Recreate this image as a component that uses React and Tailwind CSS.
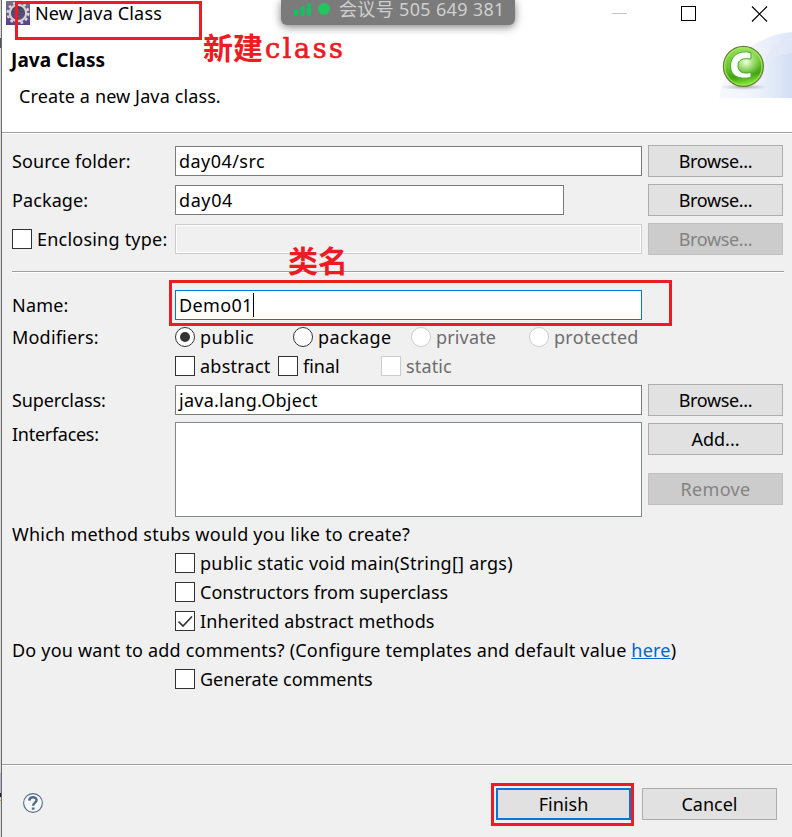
const RED = "absolute border-[3px] border-[#ed1c24]";

function Button({ children, disabled, focused, className = "" }) {
  const tone = disabled
    ? "border border-[#bfbfbf] bg-[#cccccc] text-[#838383]"
    : focused
      ? "border-2 border-[#0078d7] bg-[#e1e1e1]"
      : "border border-[#adadad] bg-[#e1e1e1]";
  return (
    <button className={`flex h-8 w-[135px] shrink-0 items-center justify-center ${tone} ${className}`}>
      <span>{children}</span>
    </button>
  );
}

function Label({ children, className = "" }) {
  return <div className={`w-[163px] shrink-0 ${className}`}>{children}</div>;
}

function Input({ children, className = "w-[467px] border-[#7a7a7a] bg-white" }) {
  return <div className={`flex h-[30px] shrink-0 items-center border pl-[3px] ${className}`}>{children}</div>;
}

function Check({ children, checked, disabled, className = "", textClass = "" }) {
  return (
    <div className={`flex items-center gap-[5px] ${className}`}>
      <span className={`flex size-5 shrink-0 border bg-white ${disabled ? "border-[#cccccc]" : "border-[#333333]"}`}>
        {checked && (
          <svg viewBox="0 0 18 18" className="size-[18px]" fill="none" stroke="#333" strokeWidth="1.7">
            <path d="M2.500 9.500 7 14 16 4.500" />
          </svg>
        )}
      </span>
      <span className={`${disabled ? "text-[#6d6d6d]" : ""} ${textClass}`}>{children}</span>
    </div>
  );
}

function Radio({ children, checked, disabled, textClass = "" }) {
  return (
    <div className="flex w-[118px] shrink-0 items-center gap-[5px]">
      <span className={`flex size-5 shrink-0 items-center justify-center rounded-full border bg-white ${disabled ? "border-[#cccccc]" : "border-[#333333]"}`}>
        {checked && <span className="size-2.5 rounded-full bg-[#333333]" />}
      </span>
      <span className={`${disabled ? "text-[#6d6d6d]" : ""} ${textClass}`}>{children}</span>
    </div>
  );
}

function GearIcon() {
  return (
    <svg viewBox="0 0 24 24" className="size-6">
      <defs>
        <linearGradient id="gearBg" x1="0" y1="0" x2="0" y2="1">
          <stop offset="0" stopColor="#77718b" />
          <stop offset="1" stopColor="#57418a" />
        </linearGradient>
        <linearGradient id="gearCore" x1="0" y1="0" x2="0" y2="1">
          <stop offset="0" stopColor="#3c3948" />
          <stop offset="1" stopColor="#5d5090" />
        </linearGradient>
      </defs>
      <path d="M0 0h24v24H0z" fill="url(#gearBg)" />
      <circle cx="12" cy="12" r="10.300" fill="none" stroke="#dcd8d8" strokeWidth="2.400" strokeDasharray="2.700 2.693" />
      <circle cx="12" cy="12" r="8.200" fill="url(#gearCore)" stroke="#d6d2d2" strokeWidth="2.200" />
      <path d="M6 9h12M5.500 12h13M6 15h12" stroke="#6a6385" strokeWidth="0.700" />
    </svg>
  );
}

function ClassBanner() {
  return (
    <svg viewBox="0 0 73 66" className="h-[66px] w-[73px]">
      <defs>
        <linearGradient id="sweep" x1="0" x2="1">
          <stop offset="0" stopColor="#f6f8fd" />
          <stop offset="0.5" stopColor="#eff3fb" />
          <stop offset="1" stopColor="#dfe7f7" />
        </linearGradient>
        <linearGradient id="sweep2" x1="0" x2="1">
          <stop offset="0" stopColor="#eef2fb" stopOpacity="0" />
          <stop offset="1" stopColor="#ccd8f1" />
        </linearGradient>
        <linearGradient id="ball" x1="0" y1="0" x2="0.2" y2="1">
          <stop offset="0" stopColor="#9be35a" />
          <stop offset="0.5" stopColor="#6cc832" />
          <stop offset="0.8" stopColor="#3fa312" />
          <stop offset="1" stopColor="#7fe030" />
        </linearGradient>
        <radialGradient id="glow">
          <stop offset="0" stopColor="#f2fde6" />
          <stop offset="1" stopColor="#b5ee80" stopOpacity="0" />
        </radialGradient>
        <radialGradient id="shade">
          <stop offset="0" stopColor="#777" stopOpacity="0.6" />
          <stop offset="1" stopColor="#999" stopOpacity="0" />
        </radialGradient>
      </defs>
      <path d="M0 66C6 27 38 3 73 0V66Z" fill="url(#sweep)" />
      <path d="M25 66V38C40 29 58 24 73 21V66Z" fill="url(#sweep2)" opacity="0.65" />
      <path d="M45 29C53 16 62 6 73 1V21C63 22 54 25 45 29Z" fill="#dfe7f7" opacity="0.45" />
      <ellipse cx="25" cy="55" rx="24" ry="3" fill="url(#shade)" />
      <circle cx="24.400" cy="34.400" r="20" fill="url(#ball)" stroke="#6d7d3a" strokeWidth="1.200" />
      <circle cx="27" cy="30" r="15" fill="url(#glow)" />
      <circle cx="24.400" cy="34.400" r="18.600" fill="none" stroke="#a6ef61" strokeWidth="1.200" opacity="0.8" />
      <path d="M32 20.500V27C24 25.800 19 27.500 19 33.500C19 39.800 24 42.300 32 40.500V45.500C20 48 11.500 44 11.500 34C11.500 23.500 20 17.800 32 20.500Z" fill="#fafff7" stroke="#48a72b" strokeWidth="1" />
    </svg>
  );
}

export default function App() {
  return (
    <div className="relative flex h-[837px] w-[792px] overflow-hidden bg-[#f0f0f0] font-['Noto_Sans','Noto_Sans_CJK_SC',sans-serif] text-[18px] leading-6 whitespace-nowrap text-black">
      <div className="flex w-px shrink-0 flex-col bg-[#d8d8d8]">
        <div className="mt-[38px] h-[10px] bg-[#555]" />
        <div className="mt-[725px] h-5 bg-[#b0b8cc]" />
        <div className="h-1 bg-[#201820]" />
        <div className="mt-[3px] h-px bg-[#e0953a]" />
      </div>
      <div className="w-px shrink-0 bg-[#6b6b6b]" />

      <div className="flex grow flex-col">
        <header className="flex h-[134px] shrink-0 flex-col border-b border-white bg-white">
          <div className="flex h-[132px] justify-between">
            <div className="flex flex-col">
              <div className="flex h-[26px] items-center pl-1">
                <GearIcon />
                <span className="ml-[5px] tracking-[0.17px]">New Java Class</span>
              </div>
              <h1 className="mt-[22px] ml-[9px] text-[19px] font-bold tracking-[0.1px]">Java Class</h1>
              <p className="mt-3 ml-[17px] tracking-[0.12px]">Create a new Java class.</p>
            </div>
            <div className="flex flex-col items-end">
              <svg viewBox="0 0 192 32" className="h-8 w-48" fill="none" shapeRendering="crispEdges">
                <path d="M12 13.500h15" stroke="#c4c4c4" />
                <path d="M81.500 6.500h14v14h-14z" stroke="#000" />
                <path d="M152 6.500l15 15M167 6.500l-15 15" stroke="#000" strokeWidth="1.200" shapeRendering="auto" />
              </svg>
              <ClassBanner />
            </div>
          </div>
          <div className="h-px bg-[#a0a0a0]" />
        </header>

        <main className="flex h-[630px] shrink-0 flex-col pt-[11px] pr-2 pl-[10px]">
          <section className="flex flex-col gap-[7px]">
            <div className="flex h-8 items-center">
              <Label className="tracking-[0.08px]">Source folder:</Label>
              <Input className="w-[467px] border-[#7a7a7a] bg-white tracking-[0.45px]">day04/src</Input>
              <Button className="ml-[6px] tracking-[-0.35px]">Browse...</Button>
            </div>
            <div className="flex h-8 items-center">
              <Label className="tracking-[0.1px]">Package:</Label>
              <Input className="w-[389px] border-[#7a7a7a] bg-white tracking-[0.6px]">day04</Input>
              <Button className="ml-[84px] tracking-[-0.35px]">Browse...</Button>
            </div>
            <div className="flex h-8 items-center">
              <Check className="w-[163px] shrink-0" textClass="tracking-[0.22px]">Enclosing type:</Check>
              <Input className="w-[467px] border-[#cccccc] shadow-[inset_0_0_0_1px_#fff]" />
              <Button disabled className="ml-[6px] tracking-[-0.35px]">Browse...</Button>
            </div>
          </section>

          <div className="mt-4 h-[2px] shrink-0 border-t border-[#a0a0a0] bg-white" />

          <div className="mt-[17px] flex h-[30px] items-center">
            <Label className="tracking-[0.2px]">Name:</Label>
            <Input className="w-[467px] border-[#0078d7] bg-white">
              <span className="tracking-[0.35px]">Demo01</span>
              <span className="h-6 w-px bg-black" />
            </Input>
          </div>
          <div className="mt-[2px] flex h-[30px] items-center">
            <Label className="tracking-[0.2px]">Modifiers:</Label>
            <Radio checked textClass="tracking-[0.5px]">public</Radio>
            <Radio textClass="tracking-[0.4px]">package</Radio>
            <Radio disabled textClass="tracking-[0.15px]">private</Radio>
            <Radio disabled textClass="tracking-[0.3px]">protected</Radio>
          </div>
          <div className="flex h-7 items-center pl-[163px]">
            <Check className="w-[103px]" textClass="tracking-[0.25px]">abstract</Check>
            <Check className="w-[103px]">final</Check>
            <Check disabled textClass="tracking-[0.15px]">static</Check>
          </div>
          <div className="mt-1 flex h-8 items-center">
            <Label className="tracking-[-0.1px]">Superclass:</Label>
            <Input className="w-[467px] border-[#7a7a7a] bg-white tracking-[0.25px]">java.lang.Object</Input>
            <Button className="ml-[6px] tracking-[-0.35px]">Browse...</Button>
          </div>
          <div className="mt-[6px] flex h-[95px]">
            <Label className="tracking-[-0.28px]">Interfaces:</Label>
            <div className="h-[95px] w-[467px] border border-[#828790] bg-white" />
            <div className="ml-[6px] flex flex-col gap-[18px] pt-px">
              <Button>Add...</Button>
              <Button disabled className="tracking-[0.3px]">Remove</Button>
            </div>
          </div>

          <section className="mt-[3px] flex flex-col gap-px">
            <div className="flex h-7 items-center tracking-[0.24px]">Which method stubs would you like to create?</div>
            <Check className="h-7 pl-[163px]" textClass="tracking-[0.24px]">public static void main(String[] args)</Check>
            <Check className="h-7 pl-[163px]">Constructors from superclass</Check>
            <Check checked className="h-7 pl-[163px]" textClass="tracking-[0.12px]">Inherited abstract methods</Check>
            <div className="flex h-7 items-center tracking-[0.19px]">
              <span>Do you want to add comments? (Configure templates and default value <a className="text-[#0066cc] underline">here</a>)</span>
            </div>
            <Check className="h-7 pl-[163px]">Generate comments</Check>
          </section>
        </main>

        <footer className="flex grow flex-col">
          <div className="h-[2px] border-t border-[#a0a0a0] bg-white" />
          <div className="mt-[22px] flex h-8 items-center pr-[15px] pl-[21px]">
            <svg viewBox="0 0 20 20" className="mb-[2px] size-5" fill="none" stroke="#526a8c">
              <circle cx="10" cy="10" r="9.400" strokeWidth="1.100" fill="#f6f7f9" />
              <path d="M6.300 7.600C6.400 3.200 13.700 3.200 13.500 7.200C13.400 9.700 10.200 9.600 10.200 12.800" strokeWidth="2.500" />
              <path d="M8.800 14.500h2.700v2.200H8.800z" fill="#526a8c" stroke="none" />
            </svg>
            <Button focused className="ml-auto">Finish</Button>
            <Button className="ml-[11px]">Cancel</Button>
          </div>
        </footer>
      </div>

      <div className="absolute top-0 left-[281px] flex h-[25px] w-[234px] items-start rounded-b-md bg-[#7b7b7b] pl-[13px] text-[#cfcfcf] shadow-[0_2px_8px_rgba(0,0,0,0.5)]">
        <svg viewBox="0 0 36 20" className="h-5 w-9 shrink-0" fill="#12c25e">
          <rect x="0" y="9" width="4" height="7" rx="1.500" />
          <rect x="6.500" y="6" width="4" height="10" rx="1.500" />
          <rect x="13" y="3" width="4" height="13" rx="1.500" />
          <circle cx="30" cy="9" r="6" fill="#22c55e" />
        </svg>
        <span className="ml-[9px] leading-[18px] tracking-[0.33px]">会议号 505 649 381</span>
      </div>

      <div className={`${RED} top-px left-[15px] h-[39px] w-[187px]`} />
      <div className={`${RED} top-[280px] left-[169px] h-[46px] w-[503px]`} />
      <div className={`${RED} top-[783px] left-[491px] h-[43px] w-[143px]`} />
      <div className="absolute top-[29px] left-[203px] flex items-center font-['Liberation_Serif','Noto_Sans_CJK_SC',serif] text-[30px] leading-10 font-bold text-[#ed1c24]">
        <span>新建</span>
        <span className="ml-[2px] font-['DejaVu_Serif',serif] text-[27px] font-normal tracking-[2.6px] [-webkit-text-stroke:0.7px_#ed1c24]">class</span>
      </div>
      <div className="absolute top-[242px] left-[288px] font-['Liberation_Serif','Noto_Sans_CJK_SC',serif] text-[30px] leading-10 font-bold text-[#ed1c24]">类名</div>
    </div>
  );
}
